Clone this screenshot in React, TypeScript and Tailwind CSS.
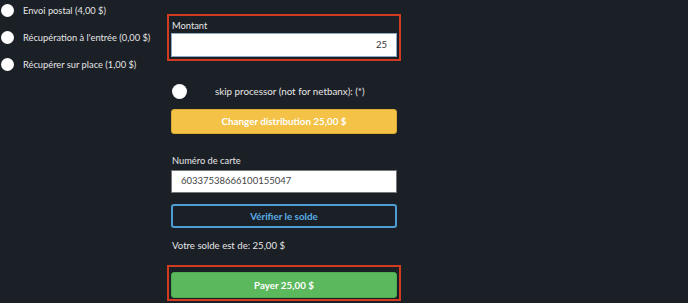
const options = [
  "Envoi postal (4,00 $)",
  "Récupération à l'entrée (0,00 $)",
  "Récupérer sur place (1,00 $)",
];

export default function App() {
  return (
    <div className="w-[688px] h-[303px] overflow-hidden bg-[#1b1f26] text-[#e6e6e6] text-[9.5px] flex items-start font-['Lato','Open_Sans',sans-serif]">
      {/* Options de livraison */}
      <div className="w-[167px] flex flex-col gap-[14px] pt-[4px] pl-[1px]">
        {options.map((label) => (
          <div key={label} className="flex items-center h-[13px] whitespace-nowrap">
            <span className="w-[13px] h-[13px] rounded-full bg-white flex-shrink-0"></span>
            <span className="ml-[9px] leading-none text-[9.3px]">{label}</span>
          </div>
        ))}
      </div>

      {/* Paiement */}
      <div className="w-[234px] flex flex-col pt-[14px]">
        <div className="shrink-0 border-2 border-[#d23a22] px-[2px] pb-[2px]">
          <div className="h-[17px] pl-[1px] flex items-center leading-none pt-[2px] text-[9.3px]">Montant</div>
          <div className="h-[24px] bg-white border border-[#8ea9c2] flex items-center justify-end pr-[9px] text-[#333]">
            25
          </div>
        </div>

        <div className="shrink-0 mt-[23px] flex items-center h-[15px] pl-[5px] whitespace-nowrap">
          <div className="w-[36px] h-[15px] rounded-full bg-[#1b1f26] relative">
            <span className="absolute left-0 top-0 w-[15px] h-[15px] rounded-full bg-white"></span>
          </div>
          <span className="ml-[7px] leading-none text-[9.8px]">skip processor (not for netbanx): (*)</span>
        </div>

        <button className="shrink-0 mt-[10px] mx-[4px] h-[25px] rounded-[3px] bg-[#f3c246] border border-[#dcab34] text-white font-bold text-[9.8px]">
          Changer distribution 25,00 $
        </button>

        <div className="shrink-0 mt-[21px] pl-[5px] h-[12px] flex items-center leading-none text-[9.3px]">Numéro de carte</div>
        <div className="shrink-0 mt-[3px] mx-[4px] h-[23px] bg-white border border-[#777] flex items-center pl-[9px] text-[#444]">
          60337538666100155047
        </div>

        <button className="shrink-0 mt-[11px] mx-[4px] h-[24px] rounded-[3px] border-2 border-[#4e9ed4] text-[#5aaee6] font-bold text-[9.8px]">
          Vérifier le solde
        </button>

        <div className="shrink-0 mt-[12px] pl-[5px] h-[12px] flex items-center leading-none text-[9.6px]">Votre solde est de: 25,00 $</div>

        <div className="shrink-0 mt-[13px] border-2 border-[#d23a22] px-[2px] pt-[5px] pb-[1px]">
          <button className="w-full h-[26px] rounded-[3px] bg-[#5cb85c] border border-[#4cae4c] text-white font-bold text-[9.8px]">
            Payer 25,00 $
          </button>
        </div>
      </div>
    </div>
  );
}
